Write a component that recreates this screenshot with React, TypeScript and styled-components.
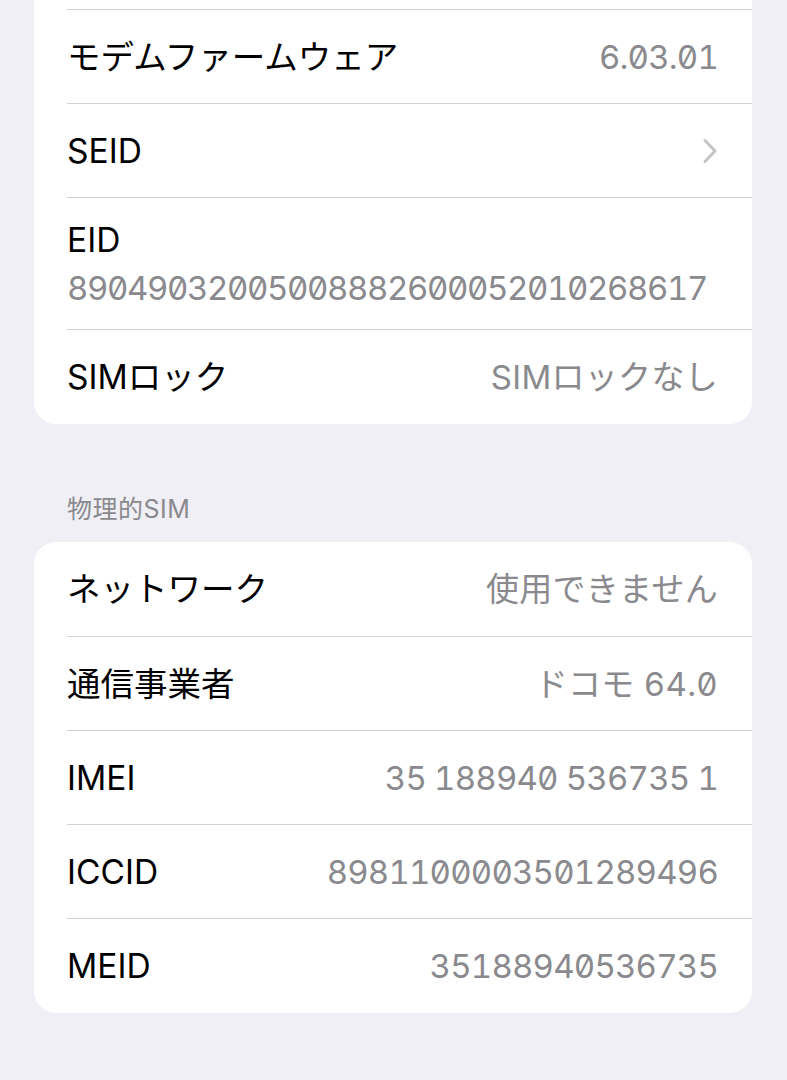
import styled, { createGlobalStyle } from 'styled-components'

const GlobalStyle = createGlobalStyle`
  body {
    margin: 0;
    background: #f0eff5;
    font-family: 'Inter', 'Noto Sans CJK JP', sans-serif;
    -webkit-font-smoothing: antialiased;
  }
`

interface IInfoRow {
  label?: string
  value?: string
  numeric?: boolean
  link?: boolean
}

// first entry is the row scrolled off above the top edge
const topRows: IInfoRow[] = [
  {},
  { label: `モデムファームウェア`, value: `6.03.01`, numeric: true },
  { label: `SEID`, link: true },
]

const simRows: IInfoRow[] = [
  { label: `ネットワーク`, value: `使用できません` },
  { label: `通信事業者`, value: `ドコモ 64.0` },
  { label: `IMEI`, value: `35 188940 536735 1`, numeric: true },
  { label: `ICCID`, value: `8981100003501289496`, numeric: true },
  { label: `MEID`, value: `35188940536735`, numeric: true },
]

const Chevron = () => (
  <svg width="16" height="26" viewBox="0 0 16 26" fill="none">
    <path
      d="M3 2.5 L13 13 L3 23.5"
      stroke="#c4c4c8"
      strokeWidth="3"
      strokeLinecap="round"
      strokeLinejoin="round"
    />
  </svg>
)

const Row = ({ label, value, numeric, link }: IInfoRow) => (
  <RowWrapper>
    {label && <Label>{label}</Label>}
    {value && <Value numeric={numeric}>{value}</Value>}
    {link && <Chevron />}
  </RowWrapper>
)

export default function App() {
  return (
    <>
      <GlobalStyle />
      <Page>
        <Card>
          {topRows.map((row, i) => (
            <Row key={i} {...row} />
          ))}
          <StackedRow>
            <Label>EID</Label>
            <EidValue>89049032005008882600052010268617</EidValue>
          </StackedRow>
          <Row label="SIMロック" value="SIMロックなし" />
        </Card>

        <SectionHeader>物理的SIM</SectionHeader>
        <Card>
          {simRows.map((row) => (
            <Row key={row.label} {...row} />
          ))}
        </Card>
      </Page>
    </>
  )
}

const Page = styled.div`
  margin-top: -85px;
  padding: 0 35px 60px 34px;
`

const Card = styled.div`
  background: #ffffff;
  border-radius: 22px;
  overflow: hidden;
`

const RowWrapper = styled.div`
  display: flex;
  align-items: center;
  justify-content: space-between;
  height: 93px;
  margin-left: 33px;
  padding-right: 34px;
  border-bottom: 1px solid #d2d2d6;

  &:first-child {
    height: 94px;
  }

  &:last-child {
    height: 94px;
    border-bottom: none;
  }
`

const StackedRow = styled.div`
  display: flex;
  flex-direction: column;
  justify-content: center;
  gap: 4px;
  height: 131px;
  margin-left: 33px;
  padding-right: 34px;
  border-bottom: 1px solid #d2d2d6;
`

const Label = styled.span`
  font-size: 33.5px;
  line-height: 44px;
  color: #000000;
`

const Value = styled.span<{ numeric?: boolean }>`
  font-size: 33px;
  line-height: 44px;
  color: #8a8a8e;
  font-feature-settings: 'tnum', 'zero';
  letter-spacing: ${({ numeric }) => (numeric ? `-0.8px` : `0.3px`)};
`

const EidValue = styled(Value)`
  letter-spacing: -1.4px;
`

const SectionHeader = styled.div`
  margin: 70px 0 18px 33px;
  font-size: 25px;
  line-height: 30px;
  letter-spacing: 0.5px;
  color: #8a8a8e;
`
